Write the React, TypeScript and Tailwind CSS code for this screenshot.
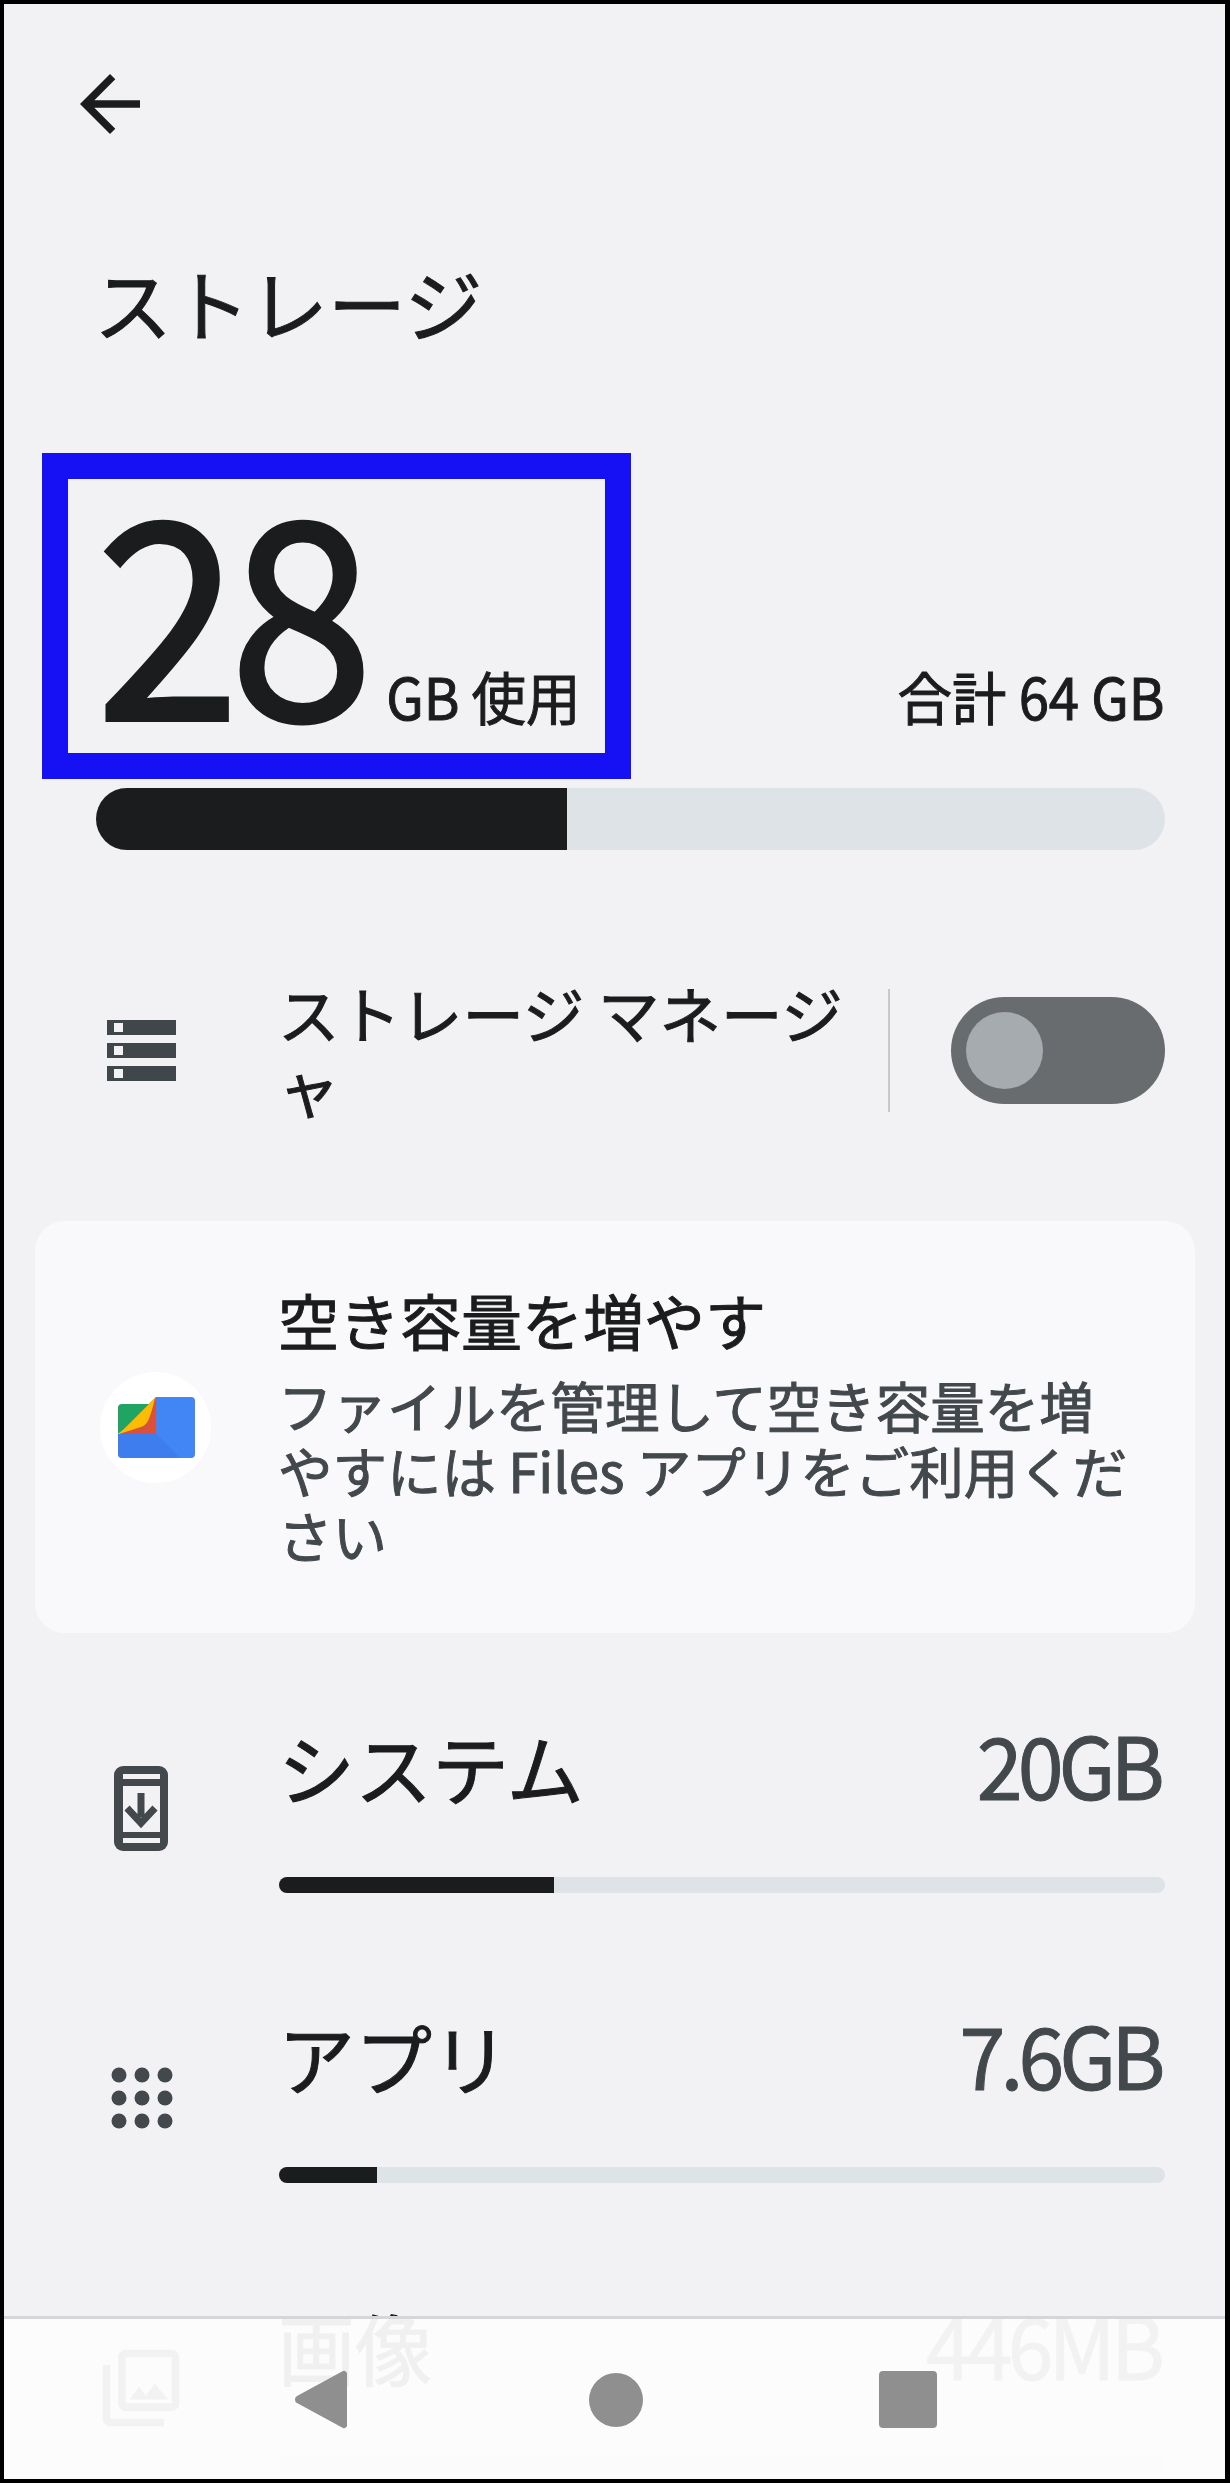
import React from "react";

function Bar({ fill }: { fill: string }) {
  return (
    <div className="mt-[64px] h-[16px] w-[886px] overflow-hidden rounded-full bg-[#dee3e8]">
      <div className={`h-full bg-[#1b1c1e] ${fill}`} />
    </div>
  );
}

function Row({ icon, title, value, fill }: { icon: React.ReactNode; title: string; value: string; fill: string }) {
  return (
    <div className="flex items-center pl-[45px]">
      <div className="flex w-[184px] justify-center">{icon}</div>
      <div className="ml-[46px] w-[886px]">
        <div className="-mt-[10px] flex h-[100px] items-baseline justify-between">
          <span className="-ml-[1px] text-[77px] leading-[100px] text-[#1b1c1e]">{title}</span>
          <span className="origin-right scale-x-[0.96] pr-[5px] text-[86px] leading-[100px] tracking-[-0.06em] text-[#42484c]">{value}</span>
        </div>
        <Bar fill={fill} />
      </div>
    </div>
  );
}

const SystemIcon = (
  <svg width="54" height="85" viewBox="0 0 54 85">
    <rect width="54" height="85" rx="9" fill="#42484c" />
    <rect x="9" y="8" width="37" height="5" fill="#f2f2f4" />
    <rect x="9" y="20" width="37" height="46" fill="#f2f2f4" />
    <rect x="9" y="72" width="37" height="5" fill="#f2f2f4" />
    <path d="M27 27v24M13 42l14 15 14-15" fill="none" stroke="#42484c" strokeWidth="7" />
  </svg>
);

const AppsIcon = (
  <svg width="62" height="62" viewBox="0 0 62 62" fill="#42484c" className="ml-[1px]">
    {[8, 31, 54].flatMap((y) =>
      [8, 31, 54].map((x) => <circle key={`${x}-${y}`} cx={x} cy={y} r="7.5" />)
    )}
  </svg>
);

const PhotosIcon = (
  <svg width="92" height="92" viewBox="0 0 24 24" fill="#42484c">
    <path d="M20 4v12H8V4h12m0-2H8c-1.1 0-2 .9-2 2v12c0 1.1.9 2 2 2h12c1.1 0 2-.9 2-2V4c0-1.1-.9-2-2-2zm-8.5 9.67l1.69 2.26 2.48-3.1L19 15H9zM2 6v14c0 1.1.9 2 2 2h14v-2H4V6H2z" />
  </svg>
);

export default function App() {
  return (
    <div className="relative box-border h-[2483px] w-[1230px] overflow-hidden border-y-4 border-r-[5px] border-l-4 border-black bg-[#f2f2f4] font-['Noto_Sans_CJK_JP','Noto_Sans',sans-serif] text-[#1b1c1e] [-webkit-text-stroke:1px]">
      <div className="pl-[61px] pt-[55px]">
        <svg width="90" height="90" viewBox="0 0 24 24" fill="#1b1c1e" className="block">
          <path d="M20 11H7.83l5.59-5.59L12 4l-8 8 8 8 1.41-1.41L7.83 13H20v-2z" />
        </svg>
      </div>

      <h1 className="ml-[90px] mt-[103px] text-[78px] font-normal leading-[100px]">ストレージ</h1>

      <div className="ml-[38px] mt-[101px] flex items-baseline justify-between pr-[60px]">
        <div className="box-border flex h-[326px] w-[589px] items-baseline justify-between border-[26px] border-[#1610f5] pl-[28px] pr-[27px]">
          <span className="-mt-[14px] origin-left scale-x-[0.95] text-[273px] leading-[273px] tracking-[-0.04em] [-webkit-text-stroke:4px]">28</span>
          <span className="origin-right scale-x-[0.955] whitespace-nowrap text-[57px] leading-none">GB 使用</span>
        </div>
        <span className="origin-right scale-x-[0.955] whitespace-nowrap text-[57px] leading-none">合計 64 GB</span>
      </div>

      <div className="ml-[92px] mt-[9px] h-[62px] w-[1069px] overflow-hidden rounded-full bg-[#dee3e8]">
        <div className="h-full w-[471px] bg-[#1b1c1e]" />
      </div>

      <div className="mt-[110px] flex h-[180px] items-center pl-[103px]">
        <svg width="69" height="61" viewBox="0 0 69 61" className="shrink-0">
          {[0, 23, 46].map((y) => (
            <g key={y}>
              <rect y={y} width="69" height="15" fill="#3f474b" />
              <rect x="7" y={y + 3} width="9" height="9" fill="#f2f2f4" />
            </g>
          ))}
        </svg>
        <div className="ml-[102px] w-[600px] text-[61.5px] leading-[74px]">
          ストレージ マネージ
          <br />
          ャ
        </div>
        <div className="ml-[10px] h-[123px] w-[2px] bg-[#c6c8ca]" />
        <div className="ml-[61px] flex h-[107px] w-[214px] items-center rounded-full bg-[#686c6f] pl-[15px]">
          <div className="h-[77px] w-[77px] rounded-full bg-[#a6abb0]" />
        </div>
      </div>

      <div className="ml-[31px] mt-[81px] flex h-[412px] w-[1160px] items-center rounded-[30px] bg-[#f9f9fb] pl-[65px]">
        <div className="flex h-[111px] w-[111px] shrink-0 items-center justify-center rounded-full bg-white">
          <svg width="77" height="61" viewBox="0 0 77 61" className="ml-[2px]">
            <path d="M4 7H37L0 37V11a4 4 0 0 1 4-4z" fill="#1fa463" />
            <path d="M1 37L38 0V37z" fill="#d9503f" />
            <path d="M1 37L37 1Q34 15 30 24Q27 29 23 30z" fill="#fbbc04" />
            <path d="M38 0H73a4 4 0 0 1 4 4V57a4 4 0 0 1-4 4H4a4 4 0 0 1-4-4V37H38z" fill="#4285f4" />
            <path d="M0 37H38L62 61H4a4 4 0 0 1-4-4z" fill="#3b78e7" fillOpacity="0.6" />
          </svg>
        </div>
        <div className="ml-[67px] w-[860px] pb-[8px]">
          <div className="text-[61px] leading-[80px]">空き容量を増やす</div>
          <div className="mt-[12px] text-[54.5px] leading-[65px] text-[#42484c]">
            ファイルを管理して空き容量を増やすには Files アプリをご利用ください
          </div>
        </div>
      </div>

      <div className="mt-[90px] flex flex-col gap-[120px]">
        <Row icon={SystemIcon} title="システム" value="20GB" fill="w-[275px]" />
        <Row icon={AppsIcon} title="アプリ" value="7.6GB" fill="w-[98px]" />
        <Row icon={PhotosIcon} title="画像" value="446MB" fill="w-0" />
      </div>

      <div className="absolute inset-x-0 bottom-0 flex h-[163px] items-center border-t-[3px] border-[#d6d6d8] bg-[#fcfcfc]/95 pl-[289px] pt-[1px]">
        <svg width="54" height="63" viewBox="0 0 54 63" className="mt-[-1px]">
          <path d="M50 3L4 28a4 4 0 0 0 0 7l46 25a3 3 0 0 0 4-3V6a3 3 0 0 0-4-3z" fill="#8f8f8f" />
        </svg>
        <div className="ml-[242px] h-[54px] w-[54px] rounded-full bg-[#8f8f8f]" />
        <div className="ml-[236px] h-[57px] w-[58px] rounded-[4px] bg-[#8f8f8f]" />
      </div>
    </div>
  );
}
